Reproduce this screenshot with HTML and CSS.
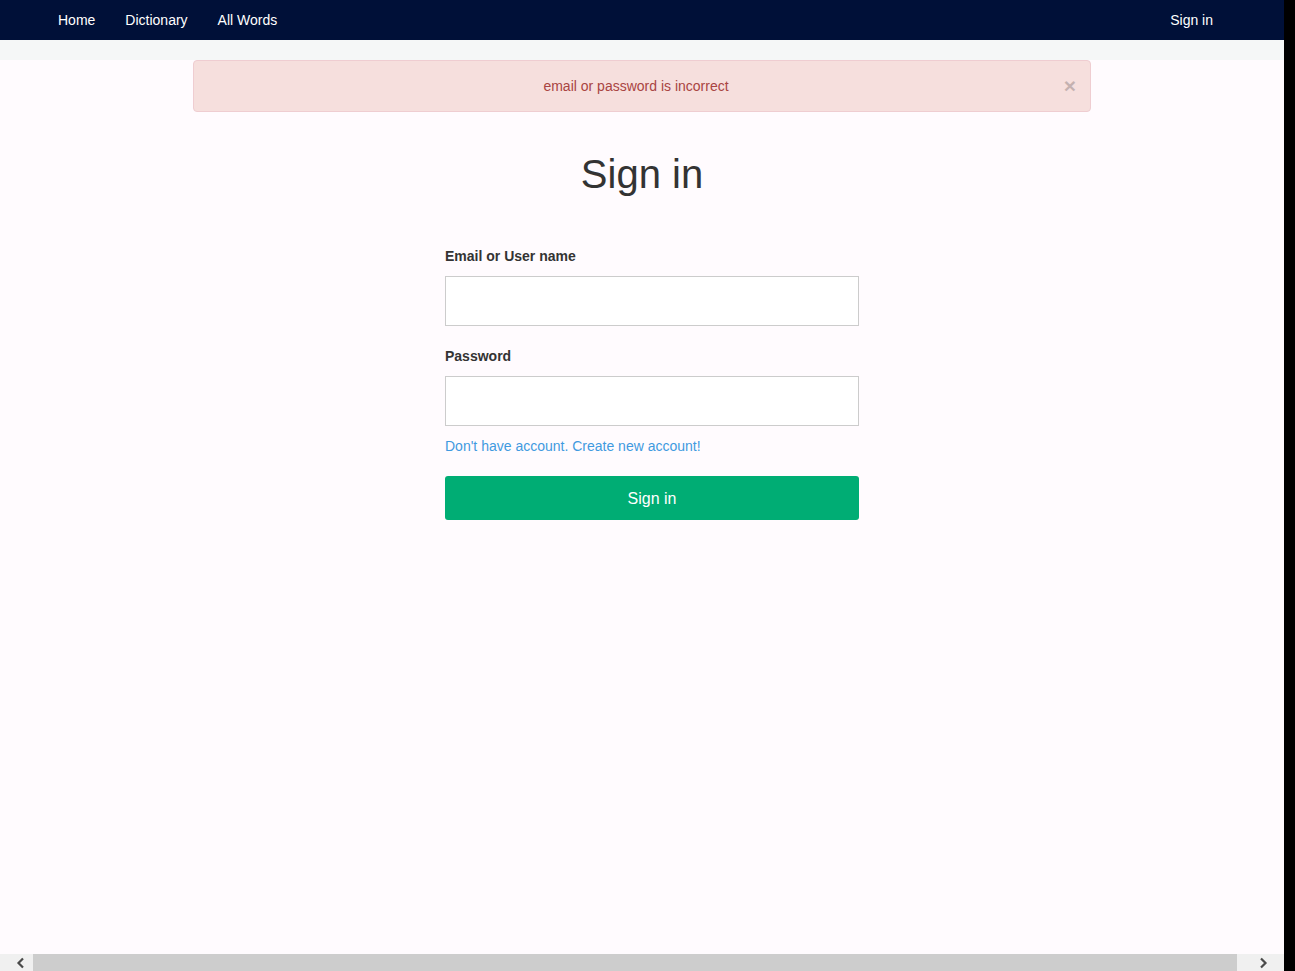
FILE: index.html
```html
<!DOCTYPE html>
<html lang="en">
<head>
<meta charset="utf-8">
<title>Sign in</title>
<link rel="stylesheet" href="styles.css">
</head>
<body>
<div class="frame">
  <div class="viewport">
    <nav class="navbar">
      <ul class="nav-left">
        <li><a href="#">Home</a></li>
        <li><a href="#">Dictionary</a></li>
        <li><a href="#">All Words</a></li>
      </ul>
      <ul class="nav-right">
        <li><a href="#">Sign in</a></li>
      </ul>
    </nav>
    <div class="band"></div>
    <main class="content">
      <div class="alert">
        <span class="alert-text">email or password is incorrect</span>
        <button class="close" type="button" aria-label="Close">&times;</button>
      </div>
      <h1 class="title">Sign in</h1>
      <form class="signin">
        <label class="label" for="email">Email or User name</label>
        <input class="field" id="email" type="text">
        <label class="label label-gap" for="password">Password</label>
        <input class="field" id="password" type="password">
        <a class="link" href="#">Don't have account. Create new account!</a>
        <button class="btn" type="button">Sign in</button>
      </form>
    </main>
    <div class="hscroll">
      <div class="sb-btn sb-left"><svg width="12" height="12" viewBox="0 0 12 12"><path d="M8 1.5 L3.5 6 L8 10.5" fill="none" stroke="#4a4a4a" stroke-width="2.2"/></svg></div>
      <div class="sb-thumb"></div>
      <div class="sb-btn sb-right"><svg width="12" height="12" viewBox="0 0 12 12"><path d="M4 1.5 L8.5 6 L4 10.5" fill="none" stroke="#4a4a4a" stroke-width="2.2"/></svg></div>
    </div>
  </div>
  <div class="edge"></div>
</div>
</body>
</html>
```

FILE: styles.css
```css
* { box-sizing: border-box; }
html, body { margin: 0; padding: 0; }
body {
  font-family: "Liberation Sans", Arial, sans-serif;
  font-size: 14px;
  line-height: 20px;
  color: #333;
  overflow: hidden;
}
.frame {
  display: flex;
  width: 1295px;
  height: 971px;
}
.viewport {
  width: 1284px;
  height: 971px;
  display: flex;
  flex-direction: column;
  background: #fffbfe;
}
.edge {
  width: 11px;
  background: #000;
}
.navbar {
  height: 40px;
  background: #001038;
  display: flex;
  justify-content: space-between;
  align-items: center;
  padding: 0 56px 0 43px;
}
.navbar ul {
  list-style: none;
  margin: 0;
  padding: 0;
  display: flex;
}
.navbar a {
  color: #fff;
  text-decoration: none;
  display: block;
  padding: 10px 15px;
  line-height: 20px;
}
.band {
  height: 20px;
  background: #f5f7f7;
}
.content {
  flex: 1;
  display: flex;
  flex-direction: column;
  align-items: center;
}
.alert {
  width: 898px;
  height: 52px;
  background: #f6dfdd;
  border: 1px solid #efcdd1;
  border-radius: 4px;
  color: #a94442;
  display: flex;
  align-items: center;
  justify-content: center;
  padding-right: 12px;
  position: relative;
  margin-bottom: 20px;
}
.alert-text { display: block; line-height: 20px; }
.close {
  position: absolute;
  right: 14px;
  top: 14px;
  border: 0;
  background: none;
  padding: 0;
  font-family: "Liberation Sans", Arial, sans-serif;
  font-size: 21px;
  font-weight: bold;
  line-height: 21px;
  color: #000;
  opacity: 0.2;
  cursor: pointer;
}
.title {
  margin: 20px 0 0;
  font-size: 40px;
  font-weight: 500;
  line-height: 44px;
  color: #333;
}
.signin {
  width: 414px;
  margin: 50px 0 0 20px;
  display: flex;
  flex-direction: column;
  align-items: stretch;
}
.label {
  font-weight: bold;
  line-height: 20px;
  margin-bottom: 10px;
}
.label-gap { margin-top: 20px; }
.field {
  height: 50px;
  border: 1px solid #ccc;
  background: #fff;
  font-size: 14px;
  padding: 6px 12px;
  outline: none;
}
.link {
  margin-top: 10px;
  color: #3f9ae0;
  text-decoration: none;
  line-height: 20px;
  align-self: flex-start;
}
.btn {
  margin-top: 20px;
  height: 44px;
  border: 0;
  border-radius: 3px;
  background: #00ad74;
  color: #fff;
  font-family: "Liberation Sans", Arial, sans-serif;
  font-size: 16px;
  line-height: 20px;
  padding: 13px 0 11px;
  cursor: pointer;
}
.hscroll {
  height: 17px;
  display: flex;
  background: #f0f0f0;
}
.sb-btn {
  display: flex;
  align-items: center;
  justify-content: center;
}
.sb-left { width: 33px; padding-left: 8px; }
.sb-right { width: 47px; padding-left: 4px; }
.sb-thumb {
  flex: 1;
  background: #cdcdcd;
}
```
